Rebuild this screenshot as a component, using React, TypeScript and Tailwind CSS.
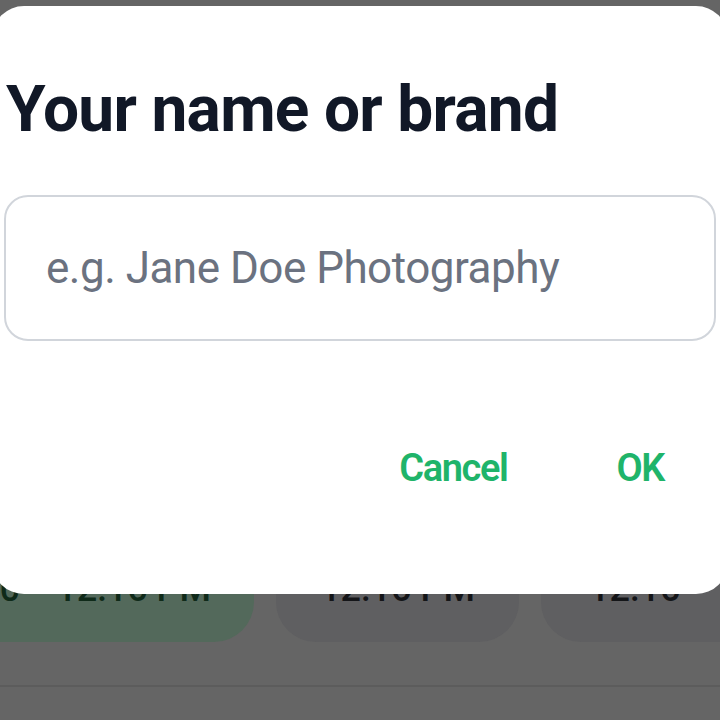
export default function App() {
  return (
    <div className="relative h-[720px] w-[720px] overflow-hidden bg-[#656565] font-['Roboto',sans-serif]">
      {/* dimmed page behind the dialog */}
      <div className="flex flex-col">
        <div className="h-[536px]" />
        <div className="flex gap-[22px]">
          <div className="ml-[-46px] flex h-[106px] w-[300px] shrink-0 items-center justify-end gap-[36px] rounded-[40px] bg-[#53695b] pr-[43px] text-[36px] font-medium whitespace-nowrap text-[#0f2a19]">
            <span>20</span>
            <span>12:16 PM</span>
          </div>
          <div className="flex h-[106px] w-[243px] shrink-0 items-center justify-center rounded-[40px] bg-[#5f5f61] text-[36px] font-medium whitespace-nowrap text-[#141518]">
            12:16 PM
          </div>
          <div className="flex h-[106px] w-[243px] shrink-0 items-center rounded-[40px] bg-[#5f5f61] pl-[48px] text-[36px] font-medium whitespace-nowrap text-[#141518]">
            12:16
          </div>
        </div>
        <div className="mt-[43px] h-[2px] bg-[#5c5c5c]" />
      </div>

      {/* dialog */}
      <div className="absolute top-[6px] right-[-8px] left-[-8px] flex h-[588px] flex-col rounded-[32px] bg-white px-[12px] pt-[72px]">
        <h2 className="ml-[2px] text-[64px] leading-none font-bold tracking-[-0.7px] text-[#111827]">Your name or brand</h2>
        <input
          type="text"
          placeholder="e.g. Jane Doe Photography"
          className="mt-[53px] h-[146px] w-full rounded-[24px] border-2 border-[#d1d5db] bg-white pl-[40px] text-[44px] tracking-[-0.5px] text-[#111827] outline-none placeholder:text-[#6b7280]"
        />
        <div className="mt-[108px] flex justify-end gap-[109px] pr-[52px]">
          <button type="button" className="text-[38px] leading-none font-semibold tracking-[-1.4px] text-[#1fb46a]">
            Cancel
          </button>
          <button type="button" className="text-[38px] leading-none font-semibold tracking-[-1.4px] text-[#1fb46a]">
            OK
          </button>
        </div>
      </div>
    </div>
  );
}
